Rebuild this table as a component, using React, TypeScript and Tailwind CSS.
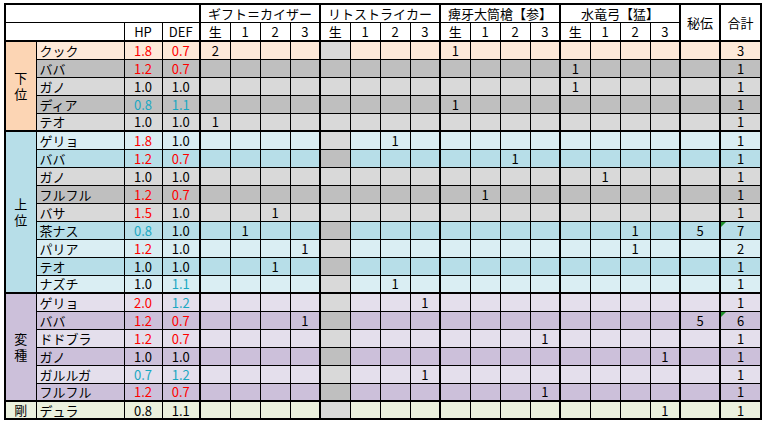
import React from "react"

type Row = {
  n: string
  hp: string
  df: string
  hc?: string
  dc?: string
  bg: string
  v: Record<number, string>
  h?: string
  t: string
  mark?: boolean
}

type Section = { label: string[]; cat: string; rows: Row[] }

const RED = "text-[#ff0000]"
const CYAN = "text-[#1ba8c2]"

const PEACH = "bg-[#fde9d9]"
const G1 = "bg-[#d9d9d9]"
const G2 = "bg-[#bfbfbf]"
const B1 = "bg-[#daeef3]"
const B2 = "bg-[#b7dee8]"
const P1 = "bg-[#e4dfec]"
const P2 = "bg-[#ccc0da]"
const GR = "bg-[#ebf1de]"

const sections: Section[] = [
  {
    label: ["下", "位"],
    cat: "bg-[#fcd5b4]",
    rows: [
      { n: "クック", hp: "1.8", df: "0.7", hc: RED, dc: RED, bg: PEACH, v: { 0: "2", 8: "1" }, t: "3" },
      { n: "ババ", hp: "1.2", df: "0.7", hc: RED, dc: RED, bg: G2, v: { 12: "1" }, t: "1" },
      { n: "ガノ", hp: "1.0", df: "1.0", bg: G1, v: { 12: "1" }, t: "1" },
      { n: "ディア", hp: "0.8", df: "1.1", hc: CYAN, dc: CYAN, bg: G2, v: { 8: "1" }, t: "1" },
      { n: "テオ", hp: "1.0", df: "1.0", bg: G1, v: { 0: "1" }, t: "1" },
    ],
  },
  {
    label: ["上", "位"],
    cat: B2,
    rows: [
      { n: "ゲリョ", hp: "1.8", df: "1.0", hc: RED, bg: B1, v: { 6: "1" }, t: "1" },
      { n: "ババ", hp: "1.2", df: "0.7", hc: RED, dc: RED, bg: B2, v: { 10: "1" }, t: "1" },
      { n: "ガノ", hp: "1.0", df: "1.0", bg: G1, v: { 13: "1" }, t: "1" },
      { n: "フルフル", hp: "1.2", df: "0.7", hc: RED, dc: RED, bg: G2, v: { 9: "1" }, t: "1" },
      { n: "バサ", hp: "1.5", df: "1.0", hc: RED, bg: G1, v: { 2: "1" }, t: "1" },
      { n: "茶ナス", hp: "0.8", df: "1.0", hc: CYAN, bg: B2, v: { 1: "1", 14: "1" }, h: "5", t: "7", mark: true },
      { n: "パリア", hp: "1.2", df: "1.0", hc: RED, bg: B1, v: { 3: "1", 14: "1" }, t: "2" },
      { n: "テオ", hp: "1.0", df: "1.0", bg: B2, v: { 2: "1" }, t: "1" },
      { n: "ナズチ", hp: "1.0", df: "1.1", dc: CYAN, bg: B1, v: { 6: "1" }, t: "1" },
    ],
  },
  {
    label: ["変", "種"],
    cat: P2,
    rows: [
      { n: "ゲリョ", hp: "2.0", df: "1.2", hc: RED, dc: CYAN, bg: P1, v: { 7: "1" }, t: "1" },
      { n: "ババ", hp: "1.2", df: "0.7", hc: RED, dc: RED, bg: P2, v: { 3: "1" }, h: "5", t: "6", mark: true },
      { n: "ドドブラ", hp: "1.2", df: "0.7", hc: RED, dc: RED, bg: P1, v: { 11: "1" }, t: "1" },
      { n: "ガノ", hp: "1.0", df: "1.0", bg: P2, v: { 15: "1" }, t: "1" },
      { n: "ガルルガ", hp: "0.7", df: "1.2", hc: CYAN, dc: CYAN, bg: P1, v: { 7: "1" }, t: "1" },
      { n: "フルフル", hp: "1.2", df: "0.7", hc: RED, dc: RED, bg: P2, v: { 11: "1" }, t: "1" },
    ],
  },
  {
    label: ["剛"],
    cat: GR,
    rows: [{ n: "デュラ", hp: "0.8", df: "1.1", bg: GR, v: { 15: "1" }, t: "1" }],
  },
]

const groups = ["ギフト＝カイザー", "リトストライカー", "痺牙大筒槍【参】", "水竜弓【猛】"]
const subs = ["生", "1", "2", "3"]

const cell = "border border-black p-0 text-center align-middle"

export default function App() {
  return (
    <div
      className="min-h-[430px] w-[765px] bg-white pl-[4px] pt-[3px] text-black"
      style={{ fontFamily: '"Noto Sans CJK JP", "Noto Sans", sans-serif' }}
    >
      <table className="w-[757px] table-fixed border-collapse border-2 border-black text-[13px] leading-none">
        <colgroup>
          <col className="w-[31px]" />
          <col className="w-[88px]" />
          <col className="w-[38px]" />
          <col className="w-[38px]" />
          {Array.from({ length: 16 }).map((_, i) => (
            <col key={i} className="w-[30px]" />
          ))}
          <col className="w-[40px]" />
          <col className="w-[41px]" />
        </colgroup>
        <thead>
          <tr className="h-[18px] bg-white">
            <td colSpan={4} className={`${cell} border-r-2`} />
            {groups.map((g) => (
              <td key={g} colSpan={4} className={`${cell} border-r-2 whitespace-nowrap`}>
                {g}
              </td>
            ))}
            <td rowSpan={2} className={`${cell} border-r-2 border-b-2`}>
              秘伝
            </td>
            <td rowSpan={2} className={`${cell} border-b-2`}>
              合計
            </td>
          </tr>
          <tr className="h-[19px] bg-white">
            <td colSpan={2} className={`${cell} border-b-2`} />
            <td className={`${cell} border-b-2`}>HP</td>
            <td className={`${cell} border-b-2 border-r-2`}>DEF</td>
            {groups.map((g) =>
              subs.map((s, j) => (
                <td key={g + s} className={`${cell} border-b-2 ${j === 3 ? "border-r-2" : ""}`}>
                  {s}
                </td>
              ))
            )}
          </tr>
        </thead>
        <tbody>
          {sections.map((sec) =>
            sec.rows.map((r, ri) => {
              const last = ri === sec.rows.length - 1
              const bb = last ? "border-b-2" : ""
              const dark = ri % 2 === 1
              return (
                <tr key={sec.label.join("") + ri} className={`h-[18px] ${r.bg}`}>
                  {ri === 0 && (
                    <td rowSpan={sec.rows.length} className={`${cell} border-b-2 ${sec.cat}`}>
                      <div className="flex flex-col items-center gap-[2px]">
                        {sec.label.map((c) => (
                          <span key={c} className="leading-[14px]">
                            {c}
                          </span>
                        ))}
                      </div>
                    </td>
                  )}
                  <td className={`${cell} ${bb} pl-[3px] text-left whitespace-nowrap`}>{r.n}</td>
                  <td className={`${cell} ${bb} ${r.hc ?? ""}`}>{r.hp}</td>
                  <td className={`${cell} ${bb} border-r-2 ${r.dc ?? ""}`}>{r.df}</td>
                  {Array.from({ length: 16 }).map((_, i) => (
                    <td
                      key={i}
                      className={`${cell} ${bb} ${i % 4 === 3 ? "border-r-2" : ""} ${
                        i === 4 ? (dark ? G2 : G1) : ""
                      }`}
                    >
                      {r.v[i] ?? ""}
                    </td>
                  ))}
                  <td className={`${cell} ${bb} border-r-2`}>{r.h ?? ""}</td>
                  <td className={`${cell} ${bb} relative`}>
                    {r.mark && (
                      <svg width="5" height="5" className="absolute left-0 top-0">
                        <polygon points="0,0 5,0 0,5" fill="#1f8f2a" />
                      </svg>
                    )}
                    {r.t}
                  </td>
                </tr>
              )
            })
          )}
        </tbody>
      </table>
    </div>
  )
}
